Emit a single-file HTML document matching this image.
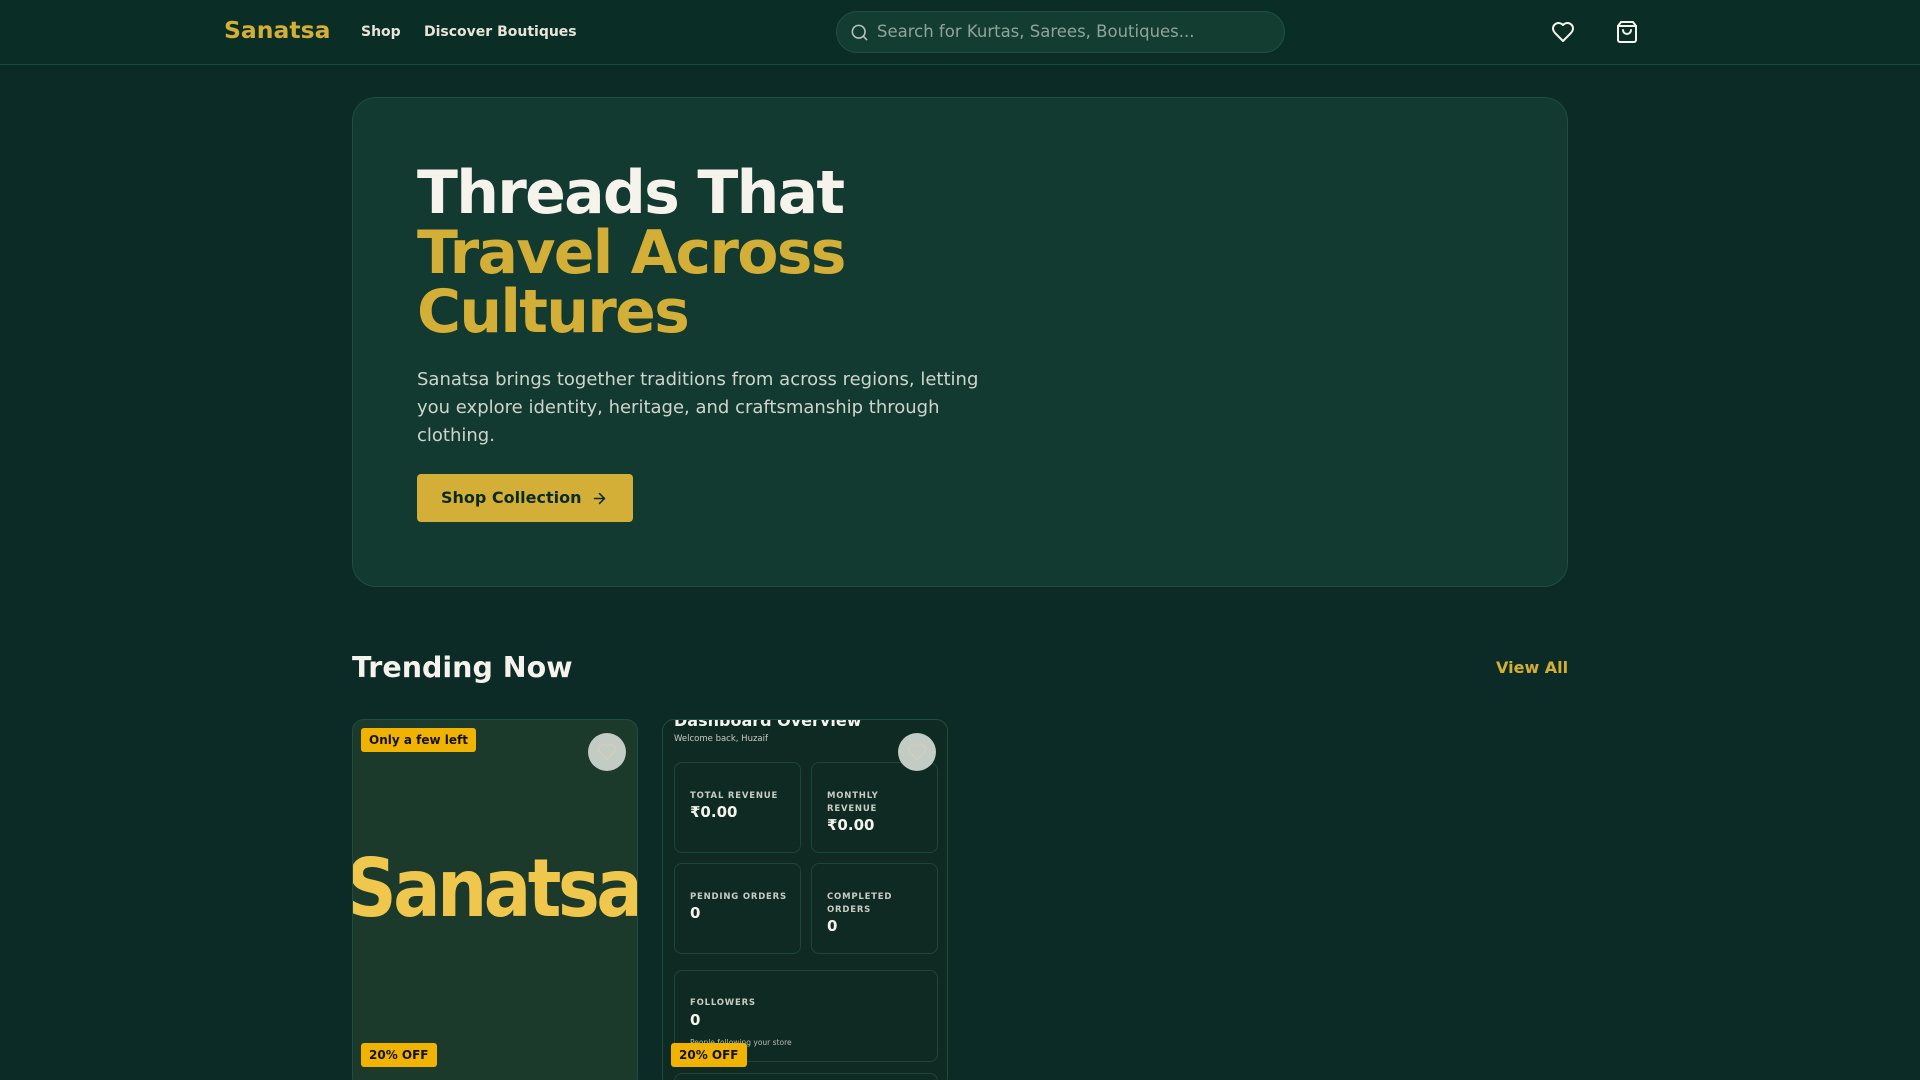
<!DOCTYPE html>
<html><head><meta charset="utf-8"><style>
*{margin:0;padding:0;box-sizing:border-box}
html,body{width:1920px;height:1080px;overflow:hidden}
body{background:#0c2b26;font-family:"DejaVu Sans","Liberation Sans",sans-serif;color:#f5f3ec;position:relative}
.nav{position:absolute;left:0;top:0;width:1920px;height:65px;background:#0a2d25;border-bottom:1px solid #1b4a3c}
.logo{position:absolute;left:224px;top:16px;font-size:23.5px;font-weight:bold;color:#d4af37}
.nl{position:absolute;top:24px;font-size:14px;font-weight:bold;color:#e8e4d8}
.search{position:absolute;left:836px;top:11px;width:449px;height:42px;border-radius:21px;background:#133d31;border:1px solid #21503f}
.search span{position:absolute;left:40px;top:10px;font-size:16.5px;color:#8fa59a}
.search svg{position:absolute;left:13px;top:11px}
.hero{position:absolute;left:352px;top:97px;width:1216px;height:490px;border-radius:24px;background:#123a30;border:1px solid #1f4d3f}
h1{position:absolute;left:64px;top:66px;font-size:60px;line-height:59.5px;font-weight:bold;letter-spacing:-1.7px;color:#f5f3ec}
h1 .g{color:#d4af37}
.p{position:absolute;left:64px;top:268px;width:590px;font-size:18px;line-height:28px;color:#cfd5cc}
.btn{position:absolute;left:64px;top:376px;width:216px;height:48px;border-radius:4px;background:#d4af37;color:#0b2a22;font-weight:bold;font-size:16px;line-height:48px;padding-left:24px}
.btn svg{position:absolute;left:174px;top:16px}
.tn{position:absolute;left:352px;top:651px;font-size:28.5px;font-weight:bold}
.va{position:absolute;left:1496px;top:658px;font-size:16px;font-weight:bold;color:#d4af37}
.card{position:absolute;top:719px;width:286px;height:370px;border-radius:12px;border:1px solid #1f4d3f;overflow:hidden}
.badge{position:absolute;background:#f0b400;color:#111;font-weight:bold;font-size:12px;border-radius:3px;padding:4px 8px;line-height:16px}
.hc{position:absolute;left:235px;top:13px;width:38px;height:38px;border-radius:50%;background:#c2cbc4}
.hc svg{position:absolute;left:9px;top:9px}
.big{position:absolute;left:-7px;top:122px;font-size:80px;font-weight:bold;color:#efc74c;letter-spacing:-4px;white-space:nowrap;transform:scaleX(0.88);transform-origin:left top}
.box{position:absolute;border:1px solid #1d4637;border-radius:8px;background:#0e2a22}
.lb{position:absolute;left:15px;font-size:8.5px;font-weight:bold;letter-spacing:.8px;color:#c8ccc4;line-height:13px}
.vl{position:absolute;left:15px;font-size:15px;font-weight:bold;color:#f4f4ee}
</style></head><body>
<div class="nav">
<div class="logo">Sanatsa</div>
<div class="nl" style="left:361px">Shop</div>
<div class="nl" style="left:424px">Discover Boutiques</div>
<div class="search"><svg width="19" height="19" viewBox="0 0 24 24" fill="none" stroke="#b8c4bc" stroke-width="2" stroke-linecap="round"><circle cx="11" cy="11" r="8"/><path d="m21 21-4.3-4.3"/></svg><span>Search for Kurtas, Sarees, Boutiques...</span></div>
<svg style="position:absolute;left:1551px;top:20px" width="24" height="24" viewBox="0 0 24 24" fill="none" stroke="#f5f3ec" stroke-width="2" stroke-linecap="round" stroke-linejoin="round"><path d="M19 14c1.49-1.46 3-3.21 3-5.5A5.5 5.5 0 0 0 16.5 3c-1.76 0-3 .5-4.5 2-1.5-1.5-2.74-2-4.5-2A5.5 5.5 0 0 0 2 8.5c0 2.3 1.5 4.05 3 5.5l7 7Z"/></svg>
<svg style="position:absolute;left:1615px;top:20px" width="24" height="24" viewBox="0 0 24 24" fill="none" stroke="#f5f3ec" stroke-width="2" stroke-linecap="round" stroke-linejoin="round"><path d="M6 2 3 6v14a2 2 0 0 0 2 2h14a2 2 0 0 0 2-2V6l-3-4Z"/><path d="M3 6h18"/><path d="M16 10a4 4 0 0 1-8 0"/></svg>
</div>
<div class="hero">
<h1>Threads That<br><span class="g">Travel Across<br>Cultures</span></h1>
<div class="p">Sanatsa brings together traditions from across regions, letting you explore identity, heritage, and craftsmanship through clothing.</div>
<div class="btn">Shop Collection<svg width="17" height="17" viewBox="0 0 24 24" fill="none" stroke="#0b2a22" stroke-width="2.2" stroke-linecap="round" stroke-linejoin="round"><path d="M5 12h14"/><path d="m12 5 7 7-7 7"/></svg></div>
</div>
<div class="tn">Trending Now</div>
<div class="va">View All</div>
<div class="card" style="left:352px;background:#1c3a2c">
<div class="big">Sanatsa</div>
<div class="badge" style="left:8px;top:8px">Only a few left</div>
<div class="hc"><svg width="20" height="20" viewBox="0 0 24 24" fill="none" stroke="#d8cdb8" stroke-width="1.6"><path d="M19 14c1.49-1.46 3-3.21 3-5.5A5.5 5.5 0 0 0 16.5 3c-1.76 0-3 .5-4.5 2-1.5-1.5-2.74-2-4.5-2A5.5 5.5 0 0 0 2 8.5c0 2.3 1.5 4.05 3 5.5l7 7Z"/></svg></div>
<div class="badge" style="left:8px;top:323px">20% OFF</div>
</div>
<div class="card" style="left:662px;background:#0e2a22">
<div style="position:absolute;left:11px;top:-9px;font-size:16px;font-weight:bold;color:#f4f4ee">Dashboard Overview</div>
<div style="position:absolute;left:11px;top:14px;font-size:8.5px;color:#c8ccc4">Welcome back, Huzaif</div>
<div class="box" style="left:11px;top:42px;width:127px;height:91px"><div class="lb" style="top:27px">TOTAL REVENUE</div><div class="vl" style="top:40px">₹0.00</div></div>
<div class="box" style="left:148px;top:42px;width:127px;height:91px"><div class="lb" style="top:27px">MONTHLY<br>REVENUE</div><div class="vl" style="top:53px">₹0.00</div></div>
<div class="box" style="left:11px;top:143px;width:127px;height:91px"><div class="lb" style="top:27px">PENDING ORDERS</div><div class="vl" style="top:40px">0</div></div>
<div class="box" style="left:148px;top:143px;width:127px;height:91px"><div class="lb" style="top:27px">COMPLETED<br>ORDERS</div><div class="vl" style="top:53px">0</div></div>
<div class="box" style="left:11px;top:250px;width:264px;height:92px"><div class="lb" style="top:26px">FOLLOWERS</div><div class="vl" style="top:40px">0</div><div style="position:absolute;left:15px;top:67px;font-size:7.5px;color:#b8bcb4">People following your store</div></div>
<div class="box" style="left:11px;top:353px;width:264px;height:60px"></div>
<div class="hc"><svg width="20" height="20" viewBox="0 0 24 24" fill="none" stroke="#d8cdb8" stroke-width="1.6"><path d="M19 14c1.49-1.46 3-3.21 3-5.5A5.5 5.5 0 0 0 16.5 3c-1.76 0-3 .5-4.5 2-1.5-1.5-2.74-2-4.5-2A5.5 5.5 0 0 0 2 8.5c0 2.3 1.5 4.05 3 5.5l7 7Z"/></svg></div>
<div class="badge" style="left:8px;top:323px">20% OFF</div>
</div>
</body></html>
